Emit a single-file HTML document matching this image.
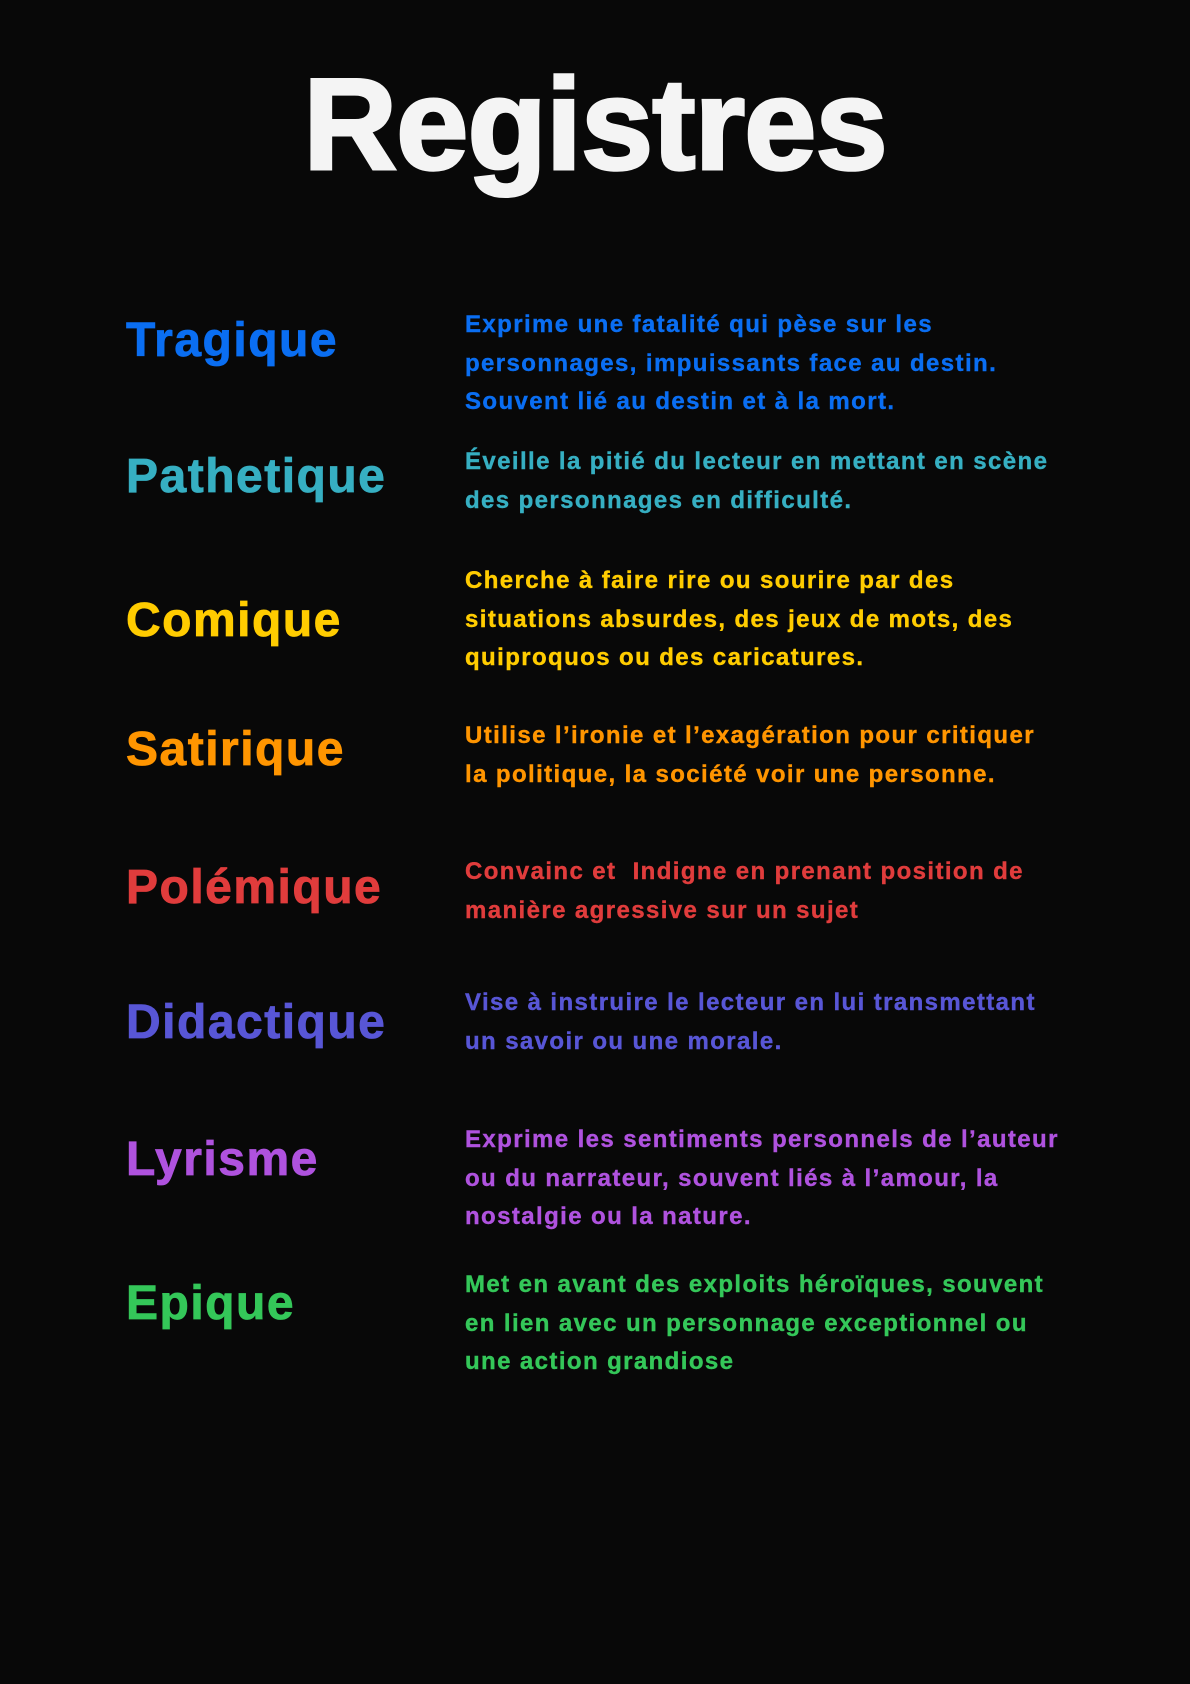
<!DOCTYPE html>
<html><head><meta charset="utf-8"><style>
body{margin:0;width:1190px;height:1684px;background:#080808;position:relative;overflow:hidden;font-family:"Liberation Sans",sans-serif;font-weight:bold}
.t{position:absolute;left:0;width:1190px;text-align:center;top:60px;font-size:130px;line-height:128px;color:#f4f4f4;letter-spacing:-1px;-webkit-text-stroke:3px #f4f4f4}
.h{position:absolute;left:126px;font-size:48px;line-height:47px;white-space:nowrap;letter-spacing:1.5px;-webkit-text-stroke:0.8px currentColor}
.d{position:absolute;left:465px;font-size:24px;line-height:38.7px;white-space:nowrap;letter-spacing:1.4px;-webkit-text-stroke:0.4px currentColor}
</style></head><body>
<div class="t">Registres</div>
<div class="h" style="top:317px;color:#0a6ef2">Tragique</div>
<div class="d" style="top:306px;color:#0a6ef2">Exprime une fatalité qui pèse sur les<br>personnages, impuissants face au destin.<br>Souvent lié au destin et à la mort.</div>
<div class="h" style="top:453px;color:#36afc2">Pathetique</div>
<div class="d" style="top:443px;color:#36afc2">Éveille la pitié du lecteur en mettant en scène<br>des personnages en difficulté.</div>
<div class="h" style="top:597px;color:#ffcc00">Comique</div>
<div class="d" style="top:562px;color:#ffcc00">Cherche à faire rire ou sourire par des<br>situations absurdes, des jeux de mots, des<br>quiproquos ou des caricatures.</div>
<div class="h" style="top:726px;color:#ff9500">Satirique</div>
<div class="d" style="top:717px;color:#ff9500">Utilise l’ironie et l’exagération pour critiquer<br>la politique, la société voir une personne.</div>
<div class="h" style="top:864px;color:#e03c3c">Polémique</div>
<div class="d" style="top:853px;color:#e03c3c">Convainc et&nbsp; Indigne en prenant position de<br>manière agressive sur un sujet</div>
<div class="h" style="top:999px;color:#5856d6">Didactique</div>
<div class="d" style="top:984px;color:#5856d6">Vise à instruire le lecteur en lui transmettant<br>un savoir ou une morale.</div>
<div class="h" style="top:1136px;color:#af52de">Lyrisme</div>
<div class="d" style="top:1121px;color:#af52de">Exprime les sentiments personnels de l’auteur<br>ou du narrateur, souvent liés à l’amour, la<br>nostalgie ou la nature.</div>
<div class="h" style="top:1280px;color:#34c759">Epique</div>
<div class="d" style="top:1266px;color:#34c759">Met en avant des exploits héroïques, souvent<br>en lien avec un personnage exceptionnel ou<br>une action grandiose</div>
</body></html>
